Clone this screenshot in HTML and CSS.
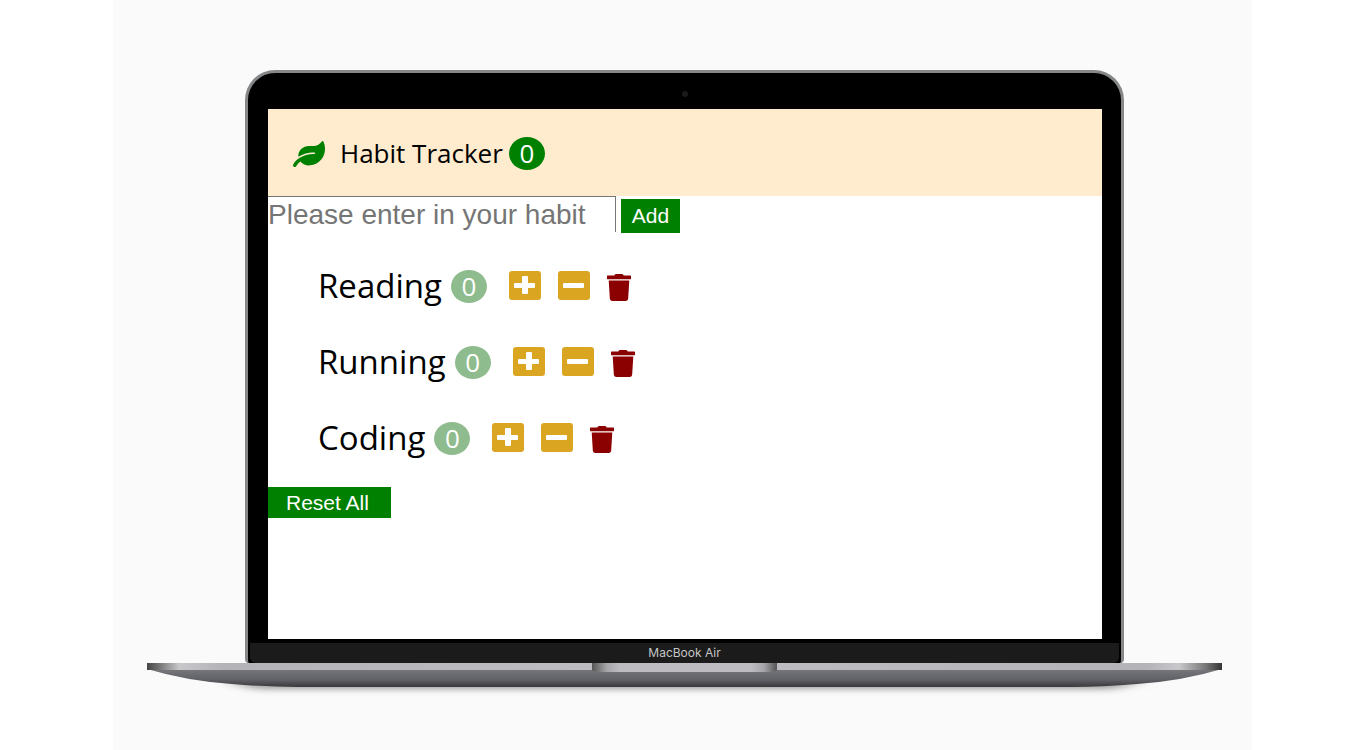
FILE: index.html
```html
<!DOCTYPE html>
<html lang="en">
<head>
<meta charset="utf-8">
<title>Habit Tracker</title>
<link rel="stylesheet" href="styles.css">
</head>
<body>
<svg class="sprite" aria-hidden="true">
  <symbol id="plus" viewBox="0 0 32 29" preserveAspectRatio="none"><rect width="32" height="29" rx="3" fill="#daa520"/><path d="M14 5h4q1 0 1 1v6h6q1 0 1 1v3q0 1-1 1h-6v5q0 1-1 1h-4q-1 0-1-1v-5H6q-1 0-1-1v-3q0-1 1-1h7V6q0-1 1-1z" fill="#fff"/></symbol>
  <symbol id="minus" viewBox="0 0 32 29" preserveAspectRatio="none"><rect width="32" height="29" rx="3" fill="#daa520"/><rect x="5" y="12" width="21" height="5" rx="1" fill="#fff"/></symbol>
  <symbol id="trash" viewBox="0 0 448 512" preserveAspectRatio="none"><path fill="#8b0000" d="M440 28H312l-9.400-15A24 24 0 0 0 281.100 0H166.800a23.720 23.720 0 0 0-21.400 13L136 28H8A8 8 0 0 0 0 36v54a8 8 0 0 0 8 8h432a8 8 0 0 0 8-8V36a8 8 0 0 0-8-8zM32 122l21.200 349a44 41 0 0 0 42 41h257.600a44 41 0 0 0 42-41L416 122z"/></symbol>
</svg>
<main class="stage">
  <div class="laptop">
    <div class="lid">
      <div class="bezel"><span class="camera"></span></div>
      <div class="screen">
        <header class="header">
          <svg class="leaf" viewBox="0 0 576 512" preserveAspectRatio="none" aria-hidden="true"><path fill="#008000" d="M546.2 9.700c-5.600-12.500-21.600-13-28.300-1.200C486.900 62.400 431.400 96 368 96h-80C182 96 96 182 96 288c0 7 .8 13.700 1.500 20.500C161.300 262.800 253.400 224 384 224c8.800 0 16 7.200 16 16s-7.200 16-16 16C132.600 256 26 410.100 2.400 468c-6.600 16.300 1.200 34.900 17.500 41.600 16.400 6.800 35-1.100 41.800-17.300 1.500-3.600 20.900-47.900 71.900-90.600 32.400 43.900 94 85.800 174.900 77.200C465.500 467.500 576 326.700 576 154.300c0-50.200-10.800-102.200-29.800-144.600z"/></svg>
          <h1 class="title">Habit Tracker</h1>
          <span class="badge badge-total">0</span>
        </header>
        <form class="add-form">
          <input class="habit-input" type="text" placeholder="Please enter in your habit" aria-label="Habit">
          <button class="button add" type="button">Add</button>
        </form>
        <ul class="habits">
          <li class="habit">
            <span class="name">Reading</span><span class="badge">0</span>
            <div class="actions">
              <button class="icon-button" aria-label="Increase"><svg class="square"><use href="#plus"/></svg></button>
              <button class="icon-button" aria-label="Decrease"><svg class="square"><use href="#minus"/></svg></button>
              <button class="icon-button" aria-label="Delete"><svg class="trash"><use href="#trash"/></svg></button>
            </div>
          </li>
          <li class="habit">
            <span class="name">Running</span><span class="badge">0</span>
            <div class="actions">
              <button class="icon-button" aria-label="Increase"><svg class="square"><use href="#plus"/></svg></button>
              <button class="icon-button" aria-label="Decrease"><svg class="square"><use href="#minus"/></svg></button>
              <button class="icon-button" aria-label="Delete"><svg class="trash"><use href="#trash"/></svg></button>
            </div>
          </li>
          <li class="habit">
            <span class="name">Coding</span><span class="badge">0</span>
            <div class="actions">
              <button class="icon-button" aria-label="Increase"><svg class="square"><use href="#plus"/></svg></button>
              <button class="icon-button" aria-label="Decrease"><svg class="square"><use href="#minus"/></svg></button>
              <button class="icon-button" aria-label="Delete"><svg class="trash"><use href="#trash"/></svg></button>
            </div>
          </li>
        </ul>
        <button class="button reset" type="button">Reset All</button>
      </div>
      <div class="chin">MacBook Air</div>
    </div>
    <svg class="base" viewBox="0 0 1075 40" preserveAspectRatio="none" aria-hidden="true">
      <defs>
        <linearGradient id="body" x2="0" y2="1"><stop offset="0" stop-color="#77787c"/><stop offset=".6" stop-color="#606166"/><stop offset="1" stop-color="#38383c"/></linearGradient>
        <linearGradient id="edge"><stop offset="0" stop-color="#444"/><stop offset=".012" stop-color="#777"/><stop offset=".03" stop-color="#c8c8cb"/><stop offset=".07" stop-color="#b3b3b8"/><stop offset=".5" stop-color="#bebec3"/><stop offset=".93" stop-color="#b3b3b8"/><stop offset=".96" stop-color="#c8c8cb"/><stop offset=".985" stop-color="#777"/><stop offset="1" stop-color="#333"/></linearGradient>
        <linearGradient id="notch"><stop offset="0" stop-color="#555"/><stop offset=".08" stop-color="#a5a5a9"/><stop offset=".15" stop-color="#bcbcc1"/><stop offset=".86" stop-color="#bcbcc1"/><stop offset=".93" stop-color="#a5a5a9"/><stop offset="1" stop-color="#555"/></linearGradient>
        <filter id="soft" x="-5%" y="-100%" width="110%" height="300%"><feGaussianBlur stdDeviation="8 3"/></filter>
      </defs>
      <path d="M75 18H1000L965 26H110z" fill="#999" filter="url(#soft)"/>
      <path d="M0 6H1075Q1035 18 990 21Q955 24 925 24H150Q120 24 85 21Q40 18 0 6z" fill="url(#body)"/>
      <rect width="1075" height="7" fill="url(#edge)"/>
      <path d="M445 0H630V7Q628 9 623 9H452Q447 9 445 7z" fill="url(#notch)"/>
    </svg>
  </div>
</main>
</body>
</html>
```
FILE: styles.css
```css
* { box-sizing: border-box; }

body {
  margin: 0;
  background: #fff;
  color: #000;
  font-family: "Open Sans", "Noto Sans", sans-serif;
}

.sprite { display: none; }

.stage {
  min-height: 100vh;
  margin: 0 114px 0 113px;
  padding: 70px 30px 40px 34px;
  background: #fafafa;
}

.lid {
  margin: 0 98px;
  padding: 0 19px 0 20px;
  border: 3px solid #858789;
  border-bottom: 0;
  border-radius: 30px 30px 4px 4px;
  background: #000;
}

.bezel {
  display: flex;
  justify-content: center;
  align-items: center;
  height: 36px;
  padding-top: 6px;
}

.camera {
  width: 6px;
  height: 6px;
  border-radius: 50%;
  background: #1a1a1c;
}

.screen {
  min-height: 530px;
  background: #fff;
}

.header {
  display: flex;
  align-items: center;
  padding: 25px 25px 23px;
  background: #ffebcd;
}

.leaf {
  width: 32px;
  height: 26px;
  margin-right: 15px;
}

.title {
  margin: 0 6px 0 0;
  font-size: 26px;
  font-weight: 400;
  line-height: 39px;
}

.badge {
  display: grid;
  place-items: center;
  width: 36px;
  height: 33px;
  border-radius: 50%;
  background: #8fbc8f;
  color: #fff;
  font-size: 26px;
  line-height: 33px;
}

.badge-total { background: #008000; }

.add-form {
  display: flex;
  align-items: flex-start;
  gap: 5px;
}

.habit-input {
  width: 348px;
  height: 36px;
  padding: 0;
  border: solid #767676;
  border-width: 1px 1px 0 0;
  background: #fff;
  font: 28px "Liberation Sans", Arial, sans-serif;
}

.habit-input::placeholder { color: #757575; }

.button {
  border: 0;
  background: #008000;
  color: #fff;
  font-family: "Liberation Sans", Arial, sans-serif;
  font-size: 21px;
}

.add {
  width: 59px;
  height: 34px;
  margin-top: 3px;
  padding: 0;
}

.habits {
  display: grid;
  gap: 28px;
  margin: 0;
  padding: 29px 0 25px 50px;
  list-style: none;
}

.habit {
  display: flex;
  align-items: center;
}

.name {
  margin-right: 9px;
  font-size: 33px;
  line-height: 48px;
}

.actions {
  display: flex;
  align-items: center;
  gap: 17px;
  margin-left: 22px;
  padding-bottom: 2px;
}

.icon-button {
  display: flex;
  padding: 0;
  border: 0;
  background: none;
}

.square { width: 32px; height: 29px; }

.trash { width: 24px; height: 27px; margin-top: 4px; }

.reset {
  display: block;
  padding: 0 22px 0 18px;
  line-height: 31px;
}

.chin {
  margin: 0 -17px 0 -18px;
  border-top: 4px solid #000;
  border-radius: 0 0 6px 6px;
  background: #1b1b1b;
  color: #c5c5c5;
  font-family: Inter, sans-serif;
  font-size: 12px;
  line-height: 20px;
  text-align: center;
}

.base {
  display: block;
  width: 100%;
  height: 40px;
  overflow: visible;
}
```
